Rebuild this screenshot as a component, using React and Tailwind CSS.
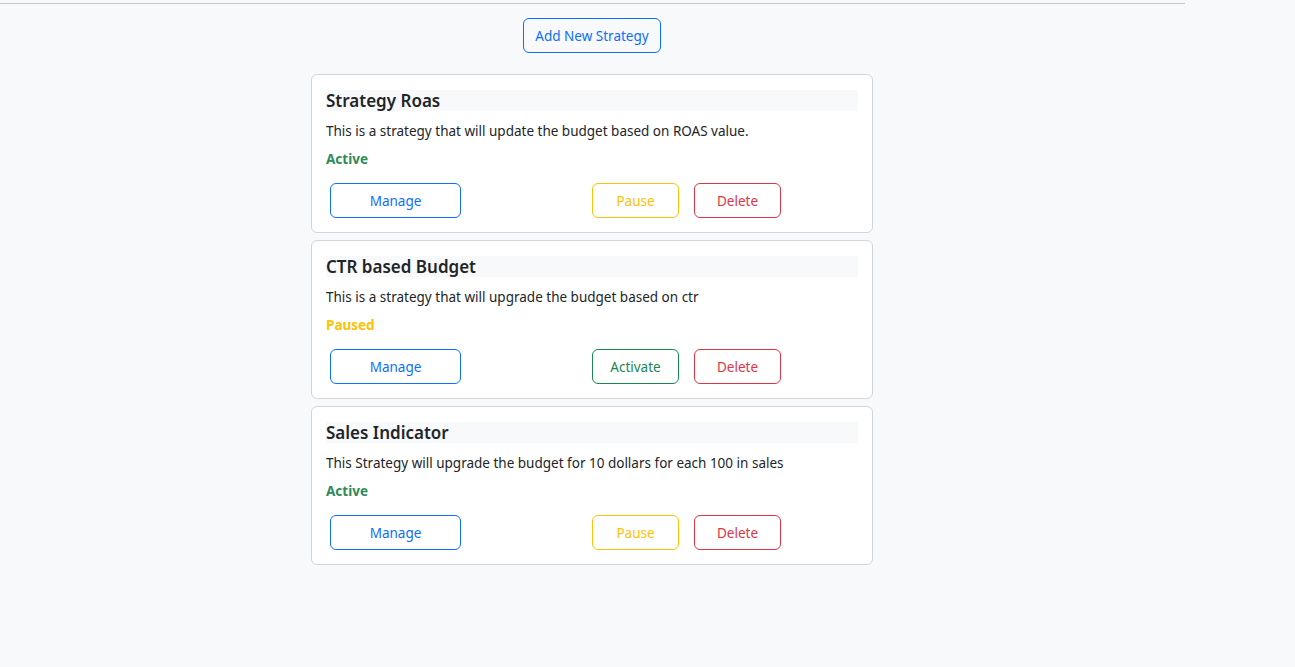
const strategies = [
  {
    name: 'Strategy Roas',
    description: 'This is a strategy that will update the budget based on ROAS value.',
    active: true,
  },
  {
    name: 'CTR based Budget',
    description: 'This is a strategy that will upgrade the budget based on ctr',
    active: false,
  },
  {
    name: 'Sales Indicator',
    description: 'This Strategy will upgrade the budget for 10 dollars for each 100 in sales',
    active: true,
  },
]

const StrategyCard = ({ name, description, active }) => (
  <div className="bg-white border border-[#d3d5d8] rounded-[6px] px-[14px] pt-[15px] pb-[14px]">
    <h5 className="h-[21px] bg-[#f8f9fa] text-[17px] leading-[21px] font-semibold text-[#212529]">{name}</h5>
    <p className="mt-[10px] text-[13.5px] leading-[20px] text-[#212529]">{description}</p>
    <p className={`mt-[8px] text-[13.5px] leading-[20px] font-bold ${active ? 'text-[#2e8b57]' : 'text-[#ffc107]'}`}>
      {active ? 'Active' : 'Paused'}
    </p>
    <div className="mt-[14px] grid grid-cols-2">
      <div className="pl-[4px]">
        <button className="w-[131px] h-[35px] pt-[1px] border border-[#0d6efd] rounded-[6px] text-[13.5px] text-[#0d6efd]">
          Manage
        </button>
      </div>
      <div className="flex gap-[15px]">
        {active ? (
          <button className="w-[87px] h-[35px] pt-[1px] border border-[#ffc107] rounded-[6px] text-[13.5px] text-[#ffc107]">
            Pause
          </button>
        ) : (
          <button className="w-[87px] h-[35px] pt-[1px] border border-[#198754] rounded-[6px] text-[13.5px] text-[#198754]">
            Activate
          </button>
        )}
        <button className="w-[87px] h-[35px] pt-[1px] border border-[#dc3545] rounded-[6px] text-[13.5px] text-[#dc3545]">
          Delete
        </button>
      </div>
    </div>
  </div>
)

export default function App() {
  return (
    <div className="min-h-screen bg-[#f8f9fa] font-['Noto_Sans',sans-serif]">
      <div className="w-[1185px] pt-[3px]">
        <div className="border-t border-[#c8c9ca]" />
        <div className="flex justify-center mt-[14px] pr-[1px]">
          <button className="h-[35px] px-[11px] pt-[1px] border border-[#0d6efd] rounded-[6px] text-[13.5px] text-[#0d6efd]">
            Add New Strategy
          </button>
        </div>
        <div className="w-[562px] ml-[311px] mt-[21px] flex flex-col gap-[7px]">
          {strategies.map((s) => (
            <StrategyCard key={s.name} {...s} />
          ))}
        </div>
      </div>
    </div>
  )
}
